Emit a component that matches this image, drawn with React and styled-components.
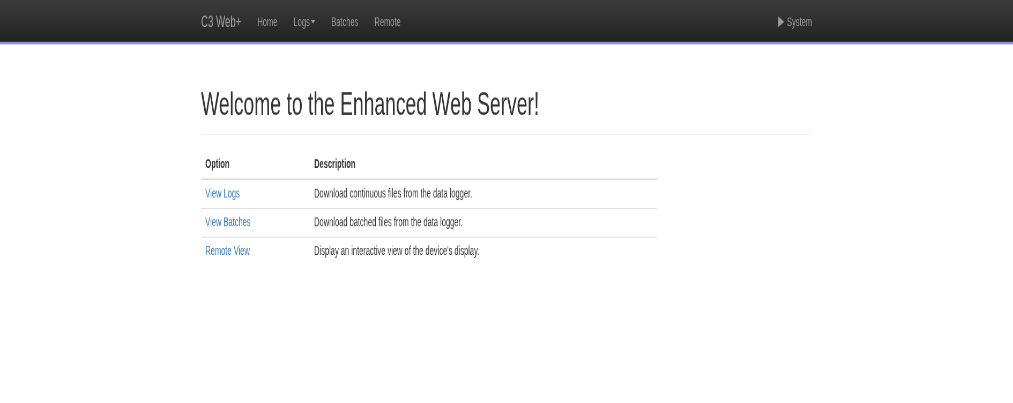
import React from "react";
import styled, { createGlobalStyle } from "styled-components";

const GlobalStyle = createGlobalStyle`
  html, body {
    margin: 0;
    padding: 0;
    background: #fff;
    overflow: hidden;
  }
  body {
    font-family: "Liberation Sans", Arial, Helvetica, sans-serif;
    font-size: 14px;
    line-height: 20px;
    color: #333;
  }
  * { box-sizing: border-box; }
`;

/* The reference is a wide page squeezed into a narrow shot: lay it out at its
   natural width and squeeze it the same way. */
const Page = styled.div`
  width: 1890px;
  transform: scale(0.536, 0.87);
  transform-origin: 0 0;
  will-change: transform;
`;

const Container = styled.div`
  width: 1140px;
  margin: 0 auto;
`;

const Navbar = styled.nav`
  height: 50.5px;
  background: linear-gradient(to bottom, #3c3c3c 0%, #222 100%);
  border-bottom: 3.5px solid #8b90d8;
`;

const NavInner = styled(Container)`
  height: 100%;
  display: flex;
  align-items: center;
  padding-top: 2px;
`;

const Brand = styled.a`
  font-size: 18px;
  line-height: 20px;
  color: #a4a4a4;
  text-decoration: none;
  margin-right: 15px;
`;

const NavLink = styled.a`
  display: flex;
  align-items: center;
  padding: 0 ${(p) => (p.$last ? "0" : "15px")} 0 15px;
  font-size: 14px;
  line-height: 20px;
  color: #9d9d9d;
  text-decoration: none;
  margin-left: ${(p) => (p.$right ? "auto" : "0")};
`;

const Caret = styled.span`
  display: inline-block;
  width: 0;
  height: 0;
  margin-left: 2px;
  border-top: 4px solid #9d9d9d;
  border-left: 4px solid transparent;
  border-right: 4px solid transparent;
`;

const PlayIcon = styled.svg`
  width: 11px;
  height: 12px;
  margin-right: 5px;
`;

const Main = styled(Container)`
  padding-top: 49px;
`;

const PageHeader = styled.div`
  border-bottom: 1px solid #eee;
  padding-bottom: 14px;
`;

const Title = styled.h1`
  margin: 0;
  font-size: 36px;
  line-height: 40px;
  font-weight: 500;
  color: #333;
`;

const Table = styled.table`
  margin-top: 18px;
  width: 851px;
  border-collapse: collapse;
  border-spacing: 0;
`;

const Th = styled.th`
  text-align: left;
  font-weight: bold;
  padding: 5px 8px 7px;
  border-bottom: 2px solid #ddd;
  vertical-align: bottom;
  width: ${(p) => p.$w || "auto"};
`;

const Td = styled.td`
  padding: 5px 8px 7px;
  border-top: 1px solid #ddd;
  vertical-align: top;
`;

const Link = styled.a`
  color: #337ab7;
  text-decoration: none;
`;

const rows = [
  ["View Logs", "Download continuous files from the data logger."],
  ["View Batches", "Download batched files from the data logger."],
  ["Remote View", "Display an interactive view of the device's display."],
];

export default function App() {
  return (
    <>
      <GlobalStyle />
      <Page>
        <Navbar>
          <NavInner>
            <Brand href="#">C3 Web+</Brand>
            <NavLink href="#">Home</NavLink>
            <NavLink href="#">
              Logs<Caret />
            </NavLink>
            <NavLink href="#">Batches</NavLink>
            <NavLink href="#">Remote</NavLink>
            <NavLink href="#" $right $last>
              <PlayIcon viewBox="0 0 11 12">
                <path d="M0 0 L11 6 L0 12 Z" fill="#9d9d9d" />
              </PlayIcon>
              System
            </NavLink>
          </NavInner>
        </Navbar>
        <Main>
          <PageHeader>
            <Title>Welcome to the Enhanced Web Server!</Title>
          </PageHeader>
          <Table>
            <thead>
              <tr>
                <Th $w="203px">Option</Th>
                <Th>Description</Th>
              </tr>
            </thead>
            <tbody>
              {rows.map(([opt, desc]) => (
                <tr key={opt}>
                  <Td>
                    <Link href="#">{opt}</Link>
                  </Td>
                  <Td>{desc}</Td>
                </tr>
              ))}
            </tbody>
          </Table>
        </Main>
      </Page>
    </>
  );
}
